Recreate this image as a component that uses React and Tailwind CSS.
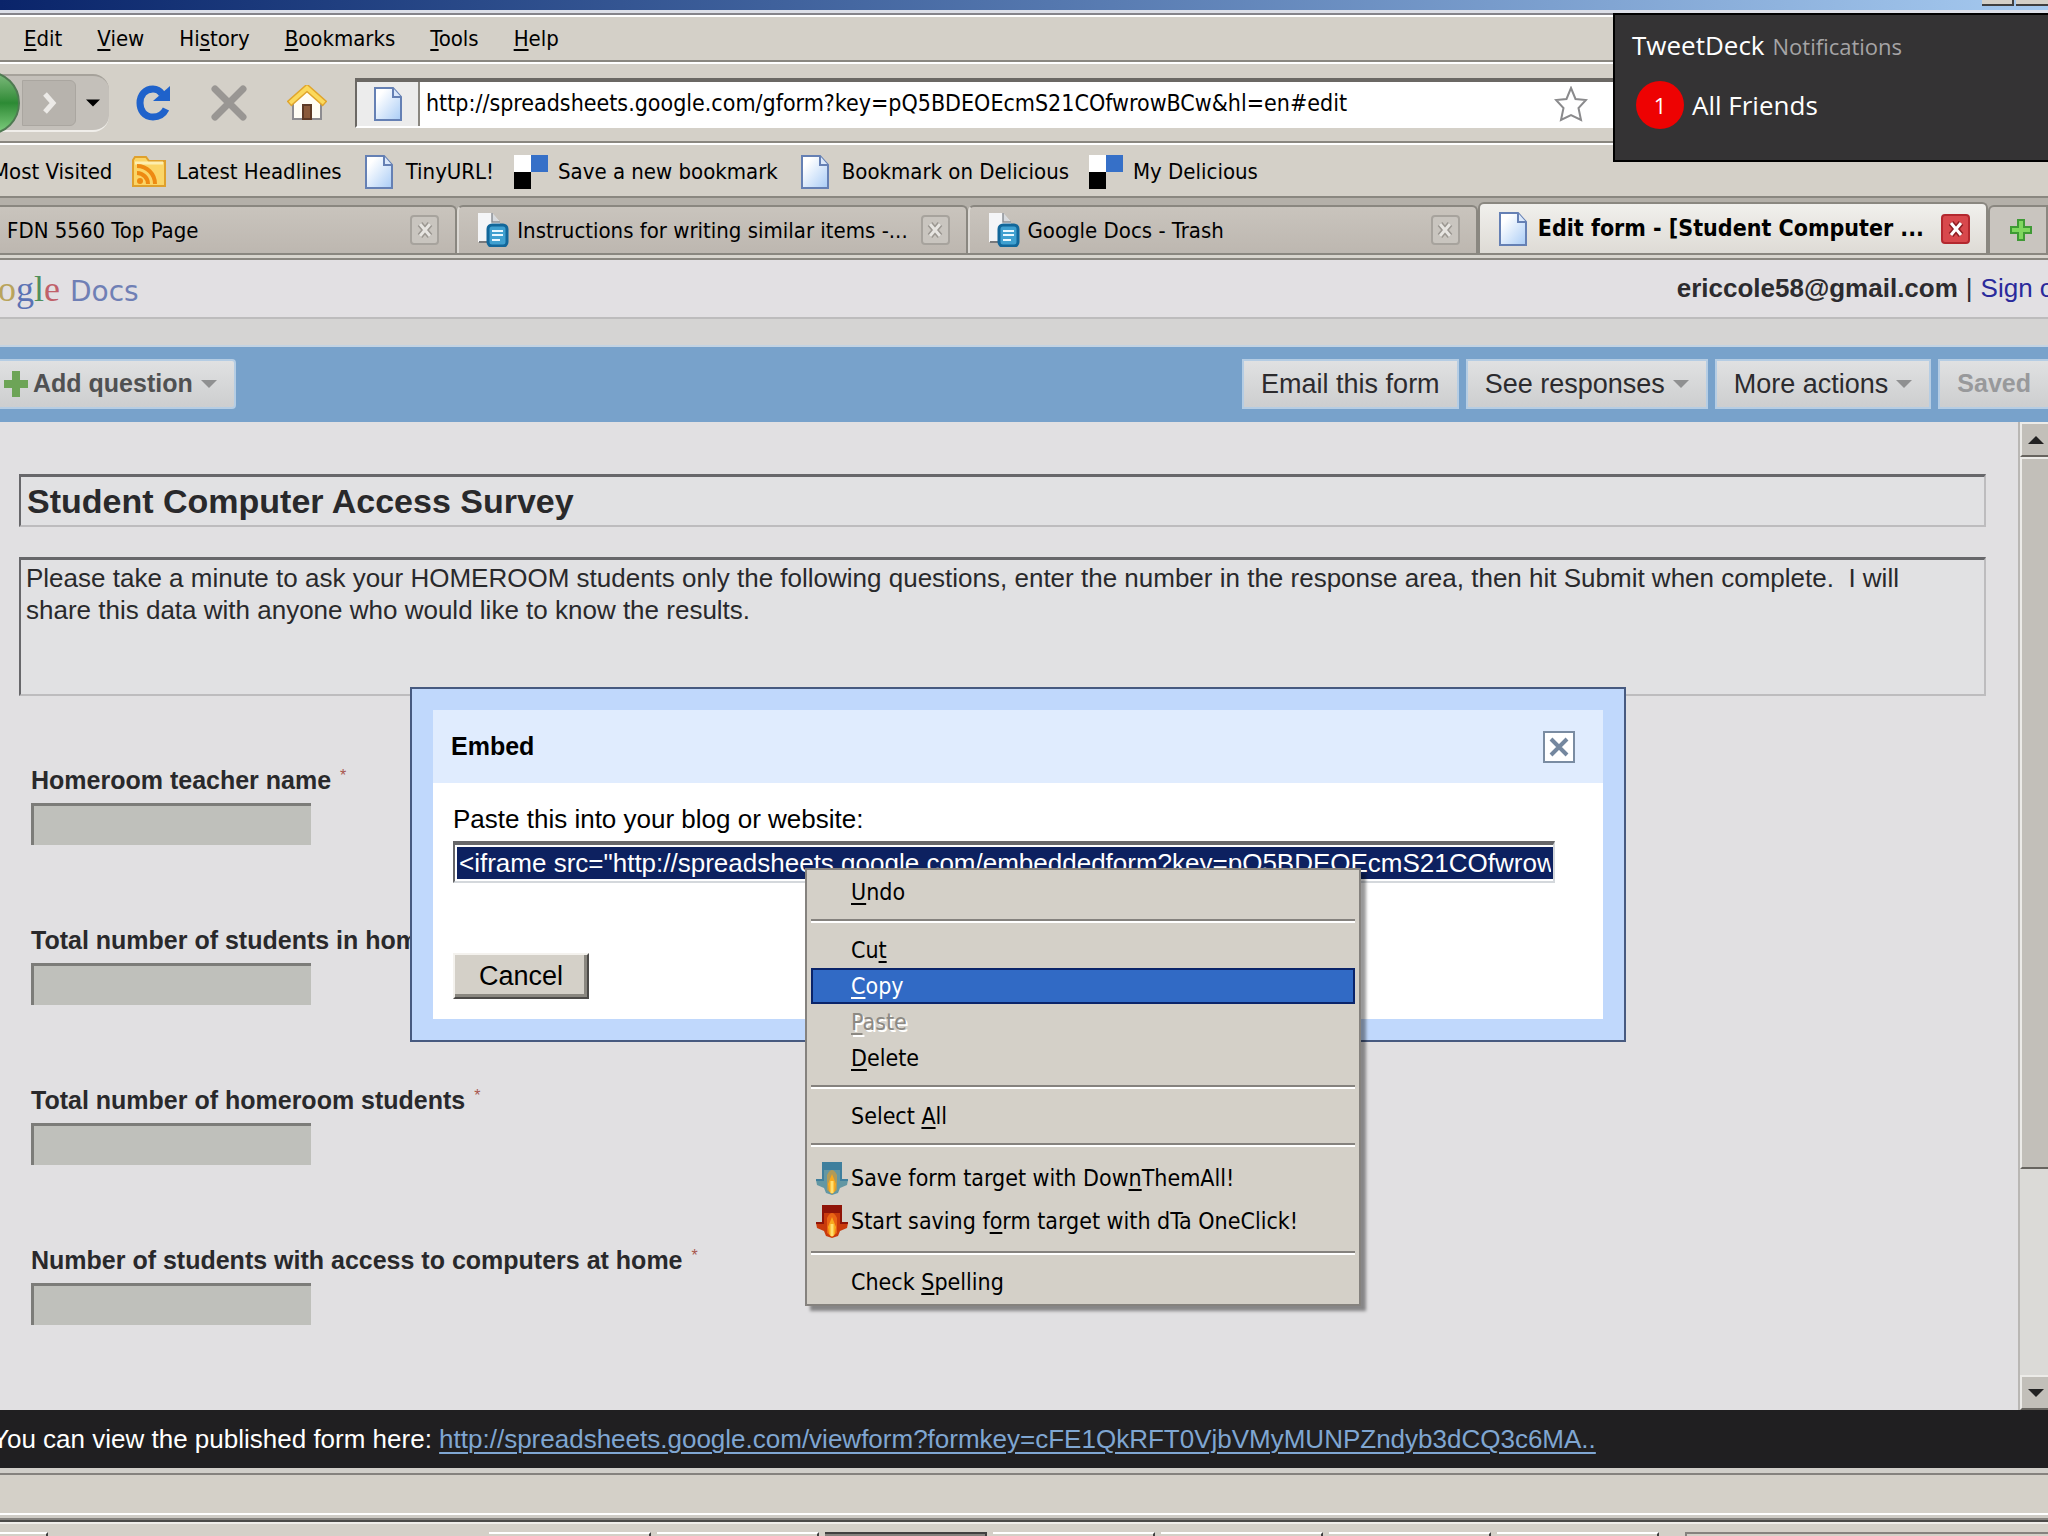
const UI_FONT = "font-['DejaVu_Sans_Condensed','Noto_Sans',sans-serif]";
const PAGE_FONT = "font-['Liberation_Sans',sans-serif]";

const MENUS = ['_Edit', '_View', 'Hi_story', '_Bookmarks', '_Tools', '_Help'];

const BOOKMARKS = [
  { label: 'Latest Headlines', icon: FeedIcon },
  { label: 'TinyURL!', icon: PageIcon },
  { label: 'Save a new bookmark', icon: DeliciousIcon },
  { label: 'Bookmark on Delicious', icon: PageIcon },
  { label: 'My Delicious', icon: DeliciousIcon },
];

const TABS = [
  { label: 'FDN 5560 Top Page', icon: PageIcon },
  { label: 'Instructions for writing similar items -...', icon: DocsIcon },
  { label: 'Google Docs - Trash', icon: DocsIcon },
  { label: 'Edit form - [Student Computer ...', icon: PageIcon, active: true },
];

const QUESTIONS = [
  'Homeroom teacher name',
  'Total number of students in homeroom',
  'Total number of homeroom students',
  'Number of students with access to computers at home',
];

const CONTEXT_MENU = [
  { label: '_Undo' },
  null,
  { label: 'Cu_t' },
  { label: '_Copy', state: 'active' },
  { label: '_Paste', state: 'disabled' },
  { label: '_Delete' },
  null,
  { label: 'Select _All' },
  null,
  { label: 'Save form target with Dow_nThemAll!', arrow: 'blue' },
  { label: 'Start saving f_orm target with dTa OneClick!', arrow: 'red' },
  null,
  { label: 'Check _Spelling' },
];

const DESCRIPTION =
  'Please take a minute to ask your HOMEROOM students only the following questions, enter the number in the response area, then hit Submit when complete.  I will\nshare this data with anyone who would like to know the results.';

const EMBED_CODE =
  '<iframe src="http://spreadsheets.google.com/embeddedform?key=pQ5BDEOEcmS21COfwrowBCw" width="760" height="869"></iframe>';

// "_" marks the keyboard accelerator, as in "Cu_t"
function Accel({ text }) {
  const [before, after] = text.split('_');
  return (
    <span className="whitespace-pre">
      {before}
      <span className="underline decoration-2 underline-offset-3">{after[0]}</span>
      {after.slice(1)}
    </span>
  );
}

// ── Icons ──────────────────────────────────────────────────────────────────

function PageIcon() {
  return (
    <svg viewBox="0 0 34 34" className="size-[34px] shrink-0" aria-hidden="true">
      <defs>
        <linearGradient id="page" x1="0" y1="0" x2="1" y2="1">
          <stop offset="0.2" stopColor="#ffffff" />
          <stop offset="1" stopColor="#a9ccf6" />
        </linearGradient>
      </defs>
      <path d="M4 1H22L30 10V33H4Z" fill="url(#page)" stroke="#6580b4" strokeWidth="2" />
      <path d="M22 1V10H30" fill="#dbe8fa" stroke="#6580b4" strokeWidth="2" />
    </svg>
  );
}

function DocsIcon() {
  return (
    <svg viewBox="0 0 34 34" className="size-[34px] shrink-0" aria-hidden="true">
      <path d="M3 0H17L25 9V29H3Z" fill="#f4f5f7" />
      <path d="M17 0V9H25" fill="#d7dade" stroke="#8d9196" strokeWidth="1.5" />
      <path d="M4 29H13" stroke="#77797c" strokeWidth="2" />
      <rect x="13" y="12" width="19" height="21" rx="4" fill="#3fa0d0" stroke="#12679a" strokeWidth="3" />
      <path d="M17 18H28M17 22H28M17 27H25" stroke="#e8f8ff" strokeWidth="2" />
    </svg>
  );
}

function FeedIcon() {
  return (
    <svg viewBox="0 0 34 34" className="size-[34px] shrink-0" aria-hidden="true">
      <path d="M1 5L3 2H14L17 6H33V31H1Z" fill="#fbd567" stroke="#dfa02c" strokeWidth="2" />
      <path d="M3 8H31" stroke="#fdeeb0" strokeWidth="3" />
      <circle cx="8" cy="26" r="3" fill="#ee8a12" />
      <path d="M5 18A11 11 0 0 1 16 29M5 11A18 18 0 0 1 23 29" fill="none" stroke="#ee8a12" strokeWidth="4" />
    </svg>
  );
}

function DeliciousIcon() {
  return (
    <svg viewBox="0 0 34 34" className="size-[34px] shrink-0" aria-hidden="true">
      <rect width="17" height="17" fill="#ffffff" />
      <rect x="17" width="17" height="17" fill="#3670c8" />
      <rect y="17" width="17" height="17" fill="#000000" />
    </svg>
  );
}

function ReloadIcon() {
  return (
    <svg viewBox="0 0 36 36" className="size-9" aria-hidden="true">
      <path d="M31 24C28 30 23 32 18 32C9 32 5 25 5 18C5 10 10 4 18 4C22 4 25 6 27 9" fill="none" stroke="#1f62cb" strokeWidth="7" />
      <path d="M35 1V16H18Z" fill="#1f62cb" />
    </svg>
  );
}

function StopIcon() {
  return (
    <svg viewBox="0 0 36 36" className="size-9" aria-hidden="true">
      <path d="M4 4L32 32M32 4L4 32" stroke="#999693" strokeWidth="7" strokeLinecap="round" />
    </svg>
  );
}

function HomeIcon() {
  return (
    <svg viewBox="0 0 40 36" className="h-9 w-10" aria-hidden="true">
      <path d="M6 17L20 5L34 17V34H6Z" fill="#fffdf4" stroke="#8d8c90" strokeWidth="2" />
      <path d="M16 20H24V34H16Z" fill="#8a5a3a" stroke="#5d3a25" strokeWidth="2" />
      <path d="M2 19L20 3L38 19" fill="none" stroke="#e0a52c" strokeWidth="7" />
      <path d="M3 18L20 3L37 18" fill="none" stroke="#fbd95c" strokeWidth="4" />
    </svg>
  );
}

function StarIcon() {
  return (
    <svg viewBox="0 0 34 36" className="h-9 w-[34px] shrink-0" aria-hidden="true">
      <path d="M17 2L21.500 13L32 14L24.500 22L27 34L17 29L7 34L9.500 22L2 14L12.500 13Z" fill="#ffffff" stroke="#8a8a8c" strokeWidth="2" />
    </svg>
  );
}

function DownloadArrow({ tone }) {
  const top = tone === 'red' ? '#8f1408' : '#3f7f9d';
  const edge = tone === 'red' ? '#c93a0c' : '#6397a3';
  const mid = tone === 'red' ? '#ea6414' : '#b09a58';
  return (
    <svg viewBox="0 0 34 34" className="size-[34px] shrink-0" aria-hidden="true">
      <path d="M8 1H26V19H33L32 24L25 27L23 32L17 34L11 32L9 27L2 24L1 19H8Z" fill={edge} />
      <path d="M8 1H26V9H8Z" fill={top} />
      <path d="M8 1V19H1M26 1V19H33" fill="none" stroke={top} strokeWidth="2" />
      <path d="M12 14Q17 4 22 14V29L17 33L12 29Z" fill={mid} />
      <path d="M17 13L21 23L20 30L17 33L14 30L13 23Z" fill="#f8a91e" />
      <path d="M17 20V32" stroke="#ffe070" strokeWidth="3" />
    </svg>
  );
}

function TabClose({ active }) {
  return (
    <button
      type="button"
      aria-label="Close tab"
      className={`flex h-[30px] w-[29px] shrink-0 items-center justify-center rounded-[4px] border-2 ${
        active ? 'border-[#b3282e] bg-[#d8484c]' : 'border-[#a7a39d] bg-[#c9c5bf]'
      }`}
    >
      <svg viewBox="0 0 16 16" className="size-4" aria-hidden="true">
        <path d="M3 2L13 14M13 2L3 14" stroke={active ? '#8d1d22' : '#9b9791'} strokeWidth="6" />
        <path d="M3 2L13 14M13 2L3 14" stroke={active ? '#ffffff' : '#e7e5e1'} strokeWidth="3" />
      </svg>
    </button>
  );
}

function Triangle({ className = '', up = false }) {
  return (
    <svg viewBox="0 0 16 8" className={`h-2 w-4 shrink-0 ${className}`} aria-hidden="true">
      <path d={up ? 'M0 8L8 0L16 8Z' : 'M0 0H16L8 8Z'} fill="currentColor" />
    </svg>
  );
}

// ── Browser chrome ─────────────────────────────────────────────────────────

function TitleBar() {
  return (
    <div>
      <div className="flex h-2.5 justify-end gap-0.5 overflow-hidden bg-linear-to-r from-[#0a246a] to-[#a6caf0]">
        <span className="h-1.5 w-8 border-r-2 border-b-2 border-[#404040] bg-[#d4d0c8]" />
        <span className="h-1.5 w-8 border-b-2 border-[#404040] bg-[#d4d0c8]" />
      </div>
      <div className="h-[3px] bg-[#dcdfe8]" />
      <div className="h-0.5 bg-[#85848a]" />
      <div className="h-0.5 bg-white" />
    </div>
  );
}

function MenuBar() {
  return (
    <nav className="flex h-[45px] items-center gap-[35px] border-b-2 border-[#8a8780] pl-6 text-[22px]">
      {MENUS.map((m) => (
        <button key={m} type="button">
          <Accel text={m} />
        </button>
      ))}
    </nav>
  );
}

function NavBar() {
  return (
    <div className="flex h-[81px] items-center border-t-2 border-b-2 border-t-white border-b-[#8a8780]">
      {/* Back is mostly off the left edge */}
      <button
        type="button"
        aria-label="Back"
        className="z-10 -ml-11 size-16 shrink-0 rounded-full border-2 border-[#4f7a52] bg-linear-to-b from-[#7dbb7d] via-[#2c8a34] to-[#7fcf80]"
      />
      <div className="-ml-5 flex h-[58px] w-[109px] shrink-0 items-center rounded-r-2xl border-t-2 border-b-2 border-t-[#a6a29b] border-b-[#f0eeea] bg-[#c4c0ba] pl-[22px]">
        <button
          type="button"
          aria-label="Forward"
          className="flex h-[46px] w-[54px] items-center justify-center rounded-r-md border border-[#aaa6a0] bg-[#b7b3ad]"
        >
          <svg viewBox="0 0 20 24" className="h-6 w-5" aria-hidden="true">
            <path d="M6 3L14 12L6 21" fill="none" stroke="#eceae7" strokeWidth="5" />
          </svg>
        </button>
        <button type="button" aria-label="History" className="ml-2.5 text-black">
          <Triangle className="w-3.5!" />
        </button>
      </div>
      <div className="ml-[26px] flex items-center gap-10">
        <button type="button" aria-label="Reload"><ReloadIcon /></button>
        <button type="button" aria-label="Stop"><StopIcon /></button>
        <button type="button" aria-label="Home"><HomeIcon /></button>
      </div>
      <div className="mr-6 ml-7 flex h-[50px] min-w-0 flex-1 items-center border-2 border-t-4 border-[#6b6864] border-r-white border-b-white bg-white">
        <span className="flex h-full w-[63px] shrink-0 items-center justify-center border-r-2 border-[#8a8780] bg-[#ececec]">
          <PageIcon />
        </span>
        <input
          aria-label="Location"
          className="ml-1.5 min-w-0 flex-1 text-[23px] text-black outline-none"
          defaultValue="http://spreadsheets.google.com/gform?key=pQ5BDEOEcmS21COfwrowBCw&hl=en#edit"
        />
        <button type="button" aria-label="Bookmark this page" className="mr-[434px]">
          <StarIcon />
        </button>
      </div>
    </div>
  );
}

function BookmarksBar() {
  return (
    <div className="-ml-2 flex h-[55px] items-center gap-5 border-t-2 border-b-2 border-t-white border-b-[#8a8780] pt-0.5 text-[22px] whitespace-nowrap">
      <a href="#most-visited">Most Visited</a>
      {BOOKMARKS.map(({ label, icon: Icon }) => (
        <a key={label} href="#bookmark" className="flex items-center gap-2.5">
          <Icon />
          {label}
        </a>
      ))}
    </div>
  );
}

function TabStrip() {
  return (
    <div className="overflow-hidden bg-[#b4b0a9] pt-1">
      <div className="-ml-[53px] flex h-[51px] items-end">
        {TABS.map(({ label, icon: Icon, active }) => (
          <div
            key={label}
            className={`flex min-w-0 flex-1 items-center gap-2 rounded-t-md border-2 border-b-0 pr-4 pl-4 ${
              active
                ? 'h-[51px] border-[#8a8780] bg-linear-to-b from-[#f1f0ed] to-[#dedbd5] text-[23px] font-bold'
                : 'h-12 border-[#8a8780] border-l-[#dcd9d4] bg-linear-to-b from-[#c9c4bd] to-[#bdb7b0] text-[22px]'
            }`}
          >
            <Icon />
            <span className="min-w-0 flex-1 overflow-hidden whitespace-nowrap">{label}</span>
            <TabClose active={active} />
          </div>
        ))}
        <button
          type="button"
          aria-label="New tab"
          className="flex h-12 w-[60px] shrink-0 items-center rounded-tl-md border-2 border-b-0 border-[#8a8780] bg-[#c9c5bf] pl-5"
        >
          <svg viewBox="0 0 22 22" className="size-[22px]" aria-hidden="true">
            <path d="M8 1H14V8H21V14H14V21H8V14H1V8H8Z" fill="#7fd65f" stroke="#3f9a35" strokeWidth="2" />
          </svg>
        </button>
      </div>
      <div className="h-[7px] border-t-2 border-b-2 border-[#8a8780] bg-[#d8d5ce]" />
    </div>
  );
}

// ── Google Docs page ───────────────────────────────────────────────────────

function DocsHeader() {
  return (
    <header className="flex h-[59px] items-center justify-between overflow-hidden border-b-2 border-[#bdbcbd] bg-[#e2e0e3] text-[26px] text-[#2c2b2e]">
      <div className="-ml-[46px] flex items-baseline gap-2.5">
        <span className="font-['Liberation_Serif',serif] text-[36px] leading-10">
          <span className="text-[#5a72b4]">G</span>
          <span className="text-[#c0606a]">o</span>
          <span className="text-[#b9a45c]">o</span>
          <span className="text-[#5a72b4]">g</span>
          <span className="text-[#4f8f5c]">l</span>
          <span className="text-[#c0606a]">e</span>
        </span>
        <span className="font-['DejaVu_Sans',sans-serif] text-[28px] leading-8 text-[#6f7fb5]">Docs</span>
      </div>
      <div className="-mr-7 flex gap-2 whitespace-nowrap">
        <b>ericcole58@gmail.com</b>
        <span>|</span>
        <a href="#signout" className="text-[#2a2a9c]">Sign out</a>
      </div>
    </header>
  );
}

function BarButton({ children, className = '' }) {
  return (
    <button
      type="button"
      className={`flex h-[50px] items-center border-2 border-[#b5cde4] bg-linear-to-b from-[#e0e1e2] to-[#cdcecf] px-[17px] whitespace-nowrap ${className}`}
    >
      {children}
    </button>
  );
}

function ActionBar() {
  return (
    <div className="overflow-hidden">
      <div className="h-7 border-b-2 border-[#c3d3e3] bg-[#d5d4d3]" />
      <div className="flex h-[75px] items-start justify-between bg-[#78a2cb] pt-3 text-[27px] text-[#2c2b2e]">
        <BarButton className="-ml-4 rounded-r-sm text-[25px] font-bold text-[#505152]">
          <svg viewBox="0 0 26 28" className="mr-1 h-7 w-[26px]" aria-hidden="true">
            <path d="M9 1H17V10H25V18H17V27H9V18H1V10H9Z" fill="#6da457" />
          </svg>
          Add question
          <Triangle className="ml-2 text-[#8f9091]" />
        </BarButton>
        <div className="flex gap-[7px]">
          <BarButton>Email this form</BarButton>
          <BarButton>See responses <Triangle className="ml-2 text-[#8f9091]" /></BarButton>
          <BarButton>More actions <Triangle className="ml-2 text-[#8f9091]" /></BarButton>
          <BarButton className="border-r-0 text-[25px] font-bold text-[#98999b]">Saved</BarButton>
        </div>
      </div>
    </div>
  );
}

function ScrollBar() {
  return (
    <div className="-mr-1 flex w-[34px] shrink-0 flex-col border-l-2 border-[#b9b7b4] bg-[#dbdad7]">
      <button
        type="button"
        aria-label="Scroll up"
        className="flex h-[35px] items-center justify-center border-2 border-[#ecebe8] border-b-[#67645f] bg-[#c2bfb9] text-[#222222]"
      >
        <Triangle up />
      </button>
      <div className="h-[712px] border-2 border-[#ecebe8] border-b-[#67645f] bg-[#c2bfb9]" />
      <div className="flex-1" />
      <button
        type="button"
        aria-label="Scroll down"
        className="flex h-[35px] items-center justify-center border-2 border-[#ecebe8] border-b-[#67645f] bg-[#c2bfb9] text-[#222222]"
      >
        <Triangle />
      </button>
    </div>
  );
}

function FormEditor() {
  return (
    <form className="min-w-0 flex-1 pt-[52px] pr-8 pl-[19px] text-[26px] text-[#29292b]">
      <input
        aria-label="Form title"
        defaultValue="Student Computer Access Survey"
        className="block h-[53px] w-full border-2 border-t-[3px] border-t-[#67676a] border-r-[#bdbcbe] border-b-[#bdbcbe] border-l-[#67676a] bg-[#e1e1e3] px-1.5 text-[34px] font-bold"
      />
      <textarea
        aria-label="Form description"
        defaultValue={DESCRIPTION}
        className="mt-[30px] block h-[139px] w-full resize-none overflow-hidden border-2 border-t-[3px] border-t-[#67676a] border-r-[#bdbcbe] border-b-[#bdbcbe] border-l-[#67676a] bg-[#e1e1e3] px-[5px] py-0.5 leading-8"
      />
      <div className="mt-[67px] ml-3 flex flex-col gap-[78px]">
        {QUESTIONS.map((q, i) => (
          <div key={q} className="flex flex-col items-start gap-1.5">
            <label htmlFor={`question-${i}`} className="h-[34px] text-[25px] leading-[34px] font-bold">
              {q} <sup className="ml-0.5 text-base font-normal text-[#a8574e]">*</sup>
            </label>
            <input
              id={`question-${i}`}
              disabled
              className="h-[42px] w-[280px] border-t-[3px] border-l-[3px] border-[#7c7c79] bg-[#bfc0bb]"
            />
          </div>
        ))}
      </div>
    </form>
  );
}

function ContextMenu() {
  return (
    <div
      role="menu"
      className={`absolute top-[179px] left-[393px] w-[556px] border-2 border-[#85827e] bg-[#d4d0c8] p-1 text-[23px] text-black shadow-[5px_5px_3px_rgba(0,0,0,0.4)] ${UI_FONT}`}
    >
      {CONTEXT_MENU.map((item, i) => {
        if (!item) {
          return (
            <div key={i} className="flex h-[22px] items-center">
              <div className="h-1 w-full border-t-2 border-b-2 border-t-[#85827e] border-b-white" />
            </div>
          );
        }
        const active = item.state === 'active';
        const disabled = item.state === 'disabled';
        return (
          <button
            key={i}
            type="button"
            role="menuitem"
            disabled={disabled}
            className={`flex w-full items-center text-left leading-7 ${item.arrow ? 'h-[43px] pl-1' : 'h-9 pl-10'} ${
              active ? 'bg-[#316ac5] text-white outline-2 -outline-offset-2 outline-[#0a246a]' : ''
            } ${disabled ? 'text-[#8c8983] [text-shadow:2px_2px_0_#ffffff]' : ''}`}
          >
            {item.arrow && <span className="w-9"><DownloadArrow tone={item.arrow} /></span>}
            <Accel text={item.label} />
          </button>
        );
      })}
    </div>
  );
}

function EmbedDialog() {
  return (
    <div
      role="dialog"
      aria-label="Embed"
      className="absolute top-[265px] left-[410px] w-[1216px] border-2 border-[#475a80] bg-[#c0d8fc] p-[21px] text-[26px] text-black"
    >
      <div className="flex h-[73px] items-center justify-between bg-[#e0ecfe] pr-7 pl-[18px]">
        <h2 className="text-[25px] font-bold">Embed</h2>
        <button
          type="button"
          aria-label="Close"
          className="flex size-8 items-center justify-center border-2 border-[#7a8ca2] bg-white"
        >
          <svg viewBox="0 0 20 20" className="size-5" aria-hidden="true">
            <path d="M2 2L18 18M18 2L2 18" stroke="#74879f" strokeWidth="4" />
          </svg>
        </button>
      </div>
      <div className="flex h-[236px] flex-col items-start bg-white px-5 pt-5">
        <label htmlFor="embed-code" className="leading-8">Paste this into your blog or website:</label>
        <div className="mt-1.5 w-[1102px] border-2 border-t-4 border-t-[#67676a] border-r-[#d4d8dc] border-b-[#d4d8dc] border-l-[#67676a] bg-white p-0.5 pr-0">
          <input
            id="embed-code"
            readOnly
            value={EMBED_CODE}
            className="block h-8 w-full bg-[#0d2160] px-0.5 text-white outline-none"
          />
        </div>
        <button
          type="button"
          className="mt-[70px] h-[46px] w-[136px] border-2 border-[#f4f2ee] border-r-[#4c4a48] border-b-[#4c4a48] bg-[#d4d0c8] text-[27px] leading-8 shadow-[inset_-3px_-3px_0_#8a8780]"
        >
          Cancel
        </button>
      </div>
      <ContextMenu />
    </div>
  );
}

function PublishedBar() {
  return (
    <div className="flex h-[58px] items-center overflow-hidden bg-[#201f21] text-[26px] whitespace-nowrap text-white">
      <p className="-ml-2">
        You can view the published form here:{' '}
        <a href="#viewform" className="text-[#7fa6d2] underline decoration-2 underline-offset-4">
          http://spreadsheets.google.com/viewform?formkey=cFE1QkRFT0VjbVMyMUNPZndyb3dCQ3c6MA..
        </a>
      </p>
    </div>
  );
}

function Taskbar() {
  return (
    <div>
      <div className="h-[7px] border-b-2 border-[#85827e] bg-[#d0cec9]" />
      <div className="h-[38px] bg-[#d4d0c8]" />
      <div className="h-[5px] border-t-2 border-white bg-[#cfccc6]" />
      <div className="h-1 border-b-2 border-[#4b4a48] bg-[#85827e]" />
      <div className="flex h-[14px] items-end gap-1.5 overflow-hidden border-t-2 border-[#efede9] bg-[#d4d0c8]">
        <div className="mr-[435px] h-1 w-12 shrink-0 border-t-2 border-r-2 border-t-white border-r-[#404040]" />
        {[0, 1, 2, 3, 4, 5, 6].map((n) => (
          <div
            key={n}
            className={`h-1 w-[162px] shrink-0 border-t-2 border-r-2 ${
              n === 2 ? 'border-[#404040] bg-[#85827e]' : 'border-t-white border-r-[#404040]'
            }`}
          />
        ))}
        <div className="ml-5 h-1 flex-1 border-t-2 border-l-2 border-[#85827e]" />
      </div>
    </div>
  );
}

function TweetDeckPopup() {
  return (
    <aside className="absolute top-[13px] right-0 z-20 h-[149px] w-[435px] border-2 border-r-0 border-black bg-[#343334] pt-2.5 pl-[17px] font-['Open_Sans','Noto_Sans',sans-serif] text-[26px] text-white">
      <div className="flex items-baseline gap-2 leading-10">
        TweetDeck
        <span className="text-[22px] text-[#a5a4a5]">Notifications</span>
      </div>
      <div className="mt-[15px] flex items-center gap-2 pl-1">
        <span className="flex size-12 items-center justify-center rounded-full bg-[#ee0202] text-[22px]">1</span>
        All Friends
      </div>
    </aside>
  );
}

export default function App() {
  return (
    <div className="relative flex h-screen flex-col overflow-hidden bg-[#d4d0c8] text-black">
      <div className={UI_FONT}>
        <TitleBar />
        <MenuBar />
        <NavBar />
        <BookmarksBar />
        <TabStrip />
      </div>
      <main className={`flex min-h-0 flex-1 flex-col bg-[#e1e0e2] ${PAGE_FONT}`}>
        <DocsHeader />
        <ActionBar />
        <div className="relative flex min-h-0 flex-1">
          <FormEditor />
          <ScrollBar />
          <EmbedDialog />
        </div>
        <PublishedBar />
      </main>
      <Taskbar />
      <TweetDeckPopup />
    </div>
  );
}
